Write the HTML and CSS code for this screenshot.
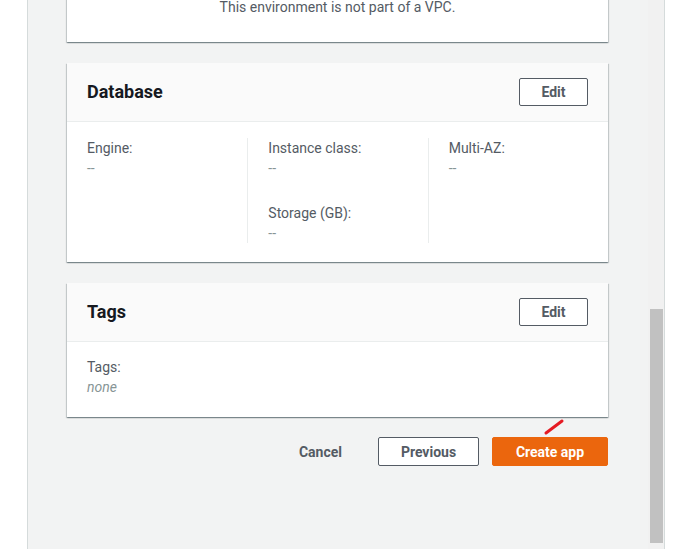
FILE: index.html
```html
<!DOCTYPE html>
<html>
<head>
<meta charset="utf-8">
<link rel="stylesheet" href="styles.css">
</head>
<body>
<div class="frame">
  <div class="gutter"></div>
  <div class="main">
    <div class="content">
      <section class="card card-vpc">
        <p class="vpc-note">This environment is not part of a VPC.</p>
      </section>

      <section class="card">
        <header class="card-header">
          <h2>Database</h2>
          <button class="btn btn-normal">Edit</button>
        </header>
        <div class="card-body columns">
          <div class="col">
            <div class="kv"><div class="label">Engine:</div><div class="value">--</div></div>
          </div>
          <div class="col">
            <div class="kv"><div class="label">Instance class:</div><div class="value">--</div></div>
            <div class="kv"><div class="label">Storage (GB):</div><div class="value">--</div></div>
          </div>
          <div class="col">
            <div class="kv"><div class="label">Multi-AZ:</div><div class="value">--</div></div>
          </div>
        </div>
      </section>

      <section class="card">
        <header class="card-header">
          <h2>Tags</h2>
          <button class="btn btn-normal">Edit</button>
        </header>
        <div class="card-body single">
          <div class="kv"><div class="label">Tags:</div><div class="value italic">none</div></div>
        </div>
      </section>

      <div class="actions">
        <button class="btn btn-link">Cancel</button>
        <button class="btn btn-normal btn-wide">Previous</button>
        <span class="primary-wrap">
          <svg class="mark" width="22" height="18" viewBox="0 0 22 18"><line x1="3" y1="15" x2="19" y2="3" stroke="#e51b23" stroke-width="3" stroke-linecap="round"/></svg>
          <button class="btn btn-primary">Create app</button>
        </span>
      </div>
    </div>
    <div class="scrollbar"><div class="thumb"></div></div>
  </div>
</div>
</body>
</html>
```
FILE: styles.css
```css
* { box-sizing: border-box; }
html, body { margin: 0; padding: 0; }
body {
  background: #ffffff;
  font-family: Roboto, "Liberation Sans", sans-serif;
  font-size: 14px;
  line-height: 20px;
  color: #16191f;
  width: 683px;
  height: 549px;
  overflow: hidden;
}
.frame {
  display: flex;
  height: 549px;
}
.gutter {
  width: 27px;
  flex: none;
  background: #ffffff;
}
.main {
  width: 638px;
  flex: none;
  display: flex;
  background: #f2f3f3;
  border-left: 1px solid #d5dbdb;
  border-right: 1px solid #d5dbdb;
}
.content {
  width: 620px;
  flex: none;
  padding: 0 40px 0 39px;
}
.card {
  background: #ffffff;
  box-shadow: 0 1px 1px 0 rgba(0, 28, 36, 0.3), 1px 1px 1px 0 rgba(0, 28, 36, 0.15), -1px 1px 1px 0 rgba(0, 28, 36, 0.15);
}
.card + .card { margin-top: 21px; }
.card-vpc {
  margin-top: -23px;
  padding: 20px 20px 25px;
}
.vpc-note {
  margin: 0;
  text-align: center;
  color: #545b64;
  line-height: 20px;
}
.card-header {
  display: flex;
  align-items: center;
  justify-content: space-between;
  padding: 15px 20px;
  background: #fafafa;
  border-bottom: 1px solid #eaeded;
}
.card-header h2 {
  margin: 0;
  font-size: 18px;
  font-weight: 700;
  line-height: 28px;
  color: #16191f;
}
.btn {
  font-family: Roboto, "Liberation Sans", sans-serif;
  font-size: 14px;
  font-weight: 700;
  line-height: 20px;
  border-radius: 2px;
  cursor: pointer;
}
.btn-normal {
  background: #ffffff;
  border: 1px solid #545b64;
  color: #545b64;
  height: 28px;
  width: 69px;
  padding: 0;
}
.btn-wide {
  width: 101px;
  height: 29px;
}
.btn-link {
  background: transparent;
  border: 1px solid transparent;
  color: #545b64;
  height: 29px;
  padding: 0 20px;
}
.btn-primary {
  background: #eb660d;
  border: 1px solid #eb660d;
  color: #ffffff;
  height: 29px;
  width: 116px;
  padding: 0;
}
.card-body.columns {
  display: grid;
  grid-template-columns: 1fr 1fr 1fr;
  padding: 16px 0 19px;
}
.col {
  padding: 0 20px;
  border-left: 1px solid #eaeded;
}
.col:first-child { border-left: none; }
.kv + .kv { margin-top: 25px; }
.label { color: #545b64; line-height: 20px; }
.value { color: #879596; line-height: 20px; }
.value.italic { font-style: italic; }
.card-body.single {
  padding: 15px 20px 20px;
}
.actions {
  display: flex;
  justify-content: flex-end;
  align-items: center;
  gap: 13px;
  margin-top: 20px;
}
.actions .btn-link { margin-right: 2px; }
.primary-wrap {
  position: relative;
  display: inline-flex;
}
.mark {
  position: absolute;
  left: 51px;
  top: -19px;
}
.scrollbar {
  width: 16px;
  flex: none;
  background: #f1f1f1;
  padding: 309px 0 6px 2px;
}
.thumb {
  width: 13px;
  height: 234px;
  background: #c1c1c1;
}
```
